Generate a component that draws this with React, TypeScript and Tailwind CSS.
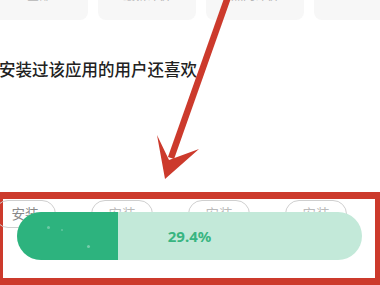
import React from 'react';

const tabs = ['全部', '最新评价', '热门评价', '…'];
const pills = ['安装', '安装', '安装', '安装'];

export default function App() {
  return (
    <div
      className="relative w-[380px] h-[285px] overflow-hidden bg-white"
      style={{ fontFamily: '"Noto Sans", "Noto Sans CJK SC", sans-serif' }}
    >
      {/* top tabs, mostly scrolled off */}
      <div className="flex gap-[10px] ml-[-10px] mt-[-14px]">
        {tabs.map((t, i) => (
          <div key={i} className="w-[98px] h-[34px] shrink-0 rounded-lg bg-[#f7f7f7] flex justify-center pt-[4px]">
            <span className="text-[12px] leading-[12px] text-[#b5b5b5]">{t}</span>
          </div>
        ))}
      </div>

      <h2 className="mt-[38px] ml-[-1px] text-[16.5px] leading-[24px] font-medium text-[#222]">
        安装过该应用的用户还喜欢
      </h2>

      {/* highlighted section */}
      <div className="relative mt-[110px] h-[93px] border-t-[7px] border-l-[3px] border-r-[5px] border-b-[7px] border-[#cc3a2c]">
        <div className="flex gap-[35px] ml-[-9px] mt-[1px]">
          {pills.map((p, i) => (
            <div
              key={i}
              className={`w-[62px] h-[28px] shrink-0 rounded-full border border-[#cfcfcf] flex items-center justify-center text-[13.5px] ${i === 0 ? 'text-[#888]' : 'text-[#bbb]'}`}
            >
              {p}
            </div>
          ))}
        </div>

        {/* download progress overlay */}
        <div className="absolute left-[14px] top-[13px] w-[345px] h-[48px] rounded-full overflow-hidden bg-[#c3e9d9] flex items-center">
          <div className="absolute left-0 top-0 h-full w-[101px] bg-[#2db37e]">
            <span className="absolute left-[30px] top-[14px] w-[3px] h-[3px] rounded-full bg-white/30" />
            <span className="absolute left-[44px] top-[17px] w-[2px] h-[2px] rounded-full bg-white/25" />
            <span className="absolute left-[70px] top-[33px] w-[3px] h-[3px] rounded-full bg-white/35" />
          </div>
          <span className="relative w-full text-center text-[15px] font-bold text-[#38b581]">29.4%</span>
        </div>
      </div>

      {/* annotation arrow */}
      <svg className="absolute left-0 top-0 pointer-events-none" width="380" height="285" viewBox="0 0 380 285">
        <line x1="229" y1="-6" x2="171" y2="158" stroke="#cc3a2c" strokeWidth="6.5" />
        <polygon points="157,135 169,160 199,149 165,179" fill="#cc3a2c" />
      </svg>
    </div>
  );
}
